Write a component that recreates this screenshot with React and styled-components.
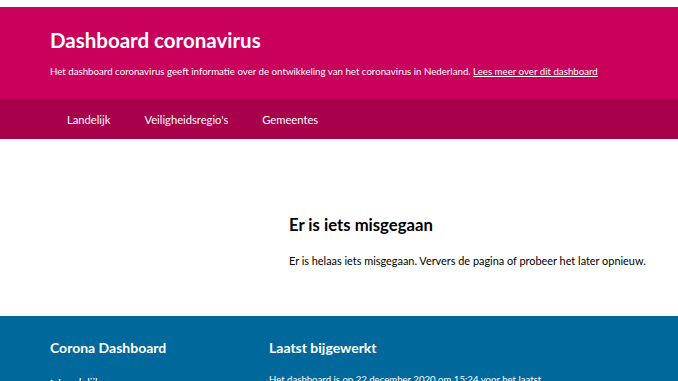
import styled, { createGlobalStyle } from "styled-components";

const GlobalStyle = createGlobalStyle`
  html, body {
    margin: 0;
    padding: 0;
    background: #fff;
    font-family: Lato, "Open Sans", sans-serif;
    color: #000;
  }
  * { box-sizing: border-box; }
`;

const TopStrip = styled.div`
  height: 7px;
  background: #fff;
`;

const Header = styled.header`
  background: #ca005d;
  color: #fff;
  height: 92px;
  padding: 20px 50px 0;
`;

const Title = styled.h1`
  margin: 0;
  font-size: 20.5px;
  line-height: 26px;
  font-weight: 700;
`;

const Lead = styled.p`
  margin: 10px 0 0;
  font-size: 9.7px;
  line-height: 16px;
  white-space: nowrap;
  a {
    color: #fff;
    text-decoration: underline;
  }
`;

const Nav = styled.nav`
  background: #a9004b;
  height: 40px;
  padding: 0 50px;
  display: flex;
  align-items: center;
`;

const NavItem = styled.a`
  color: #fff;
  font-size: 11.2px;
  padding: 0 17px;
  text-decoration: none;
`;

const Main = styled.main`
  height: 177px;
  display: grid;
  grid-template-columns: 289px 1fr;
  padding-top: 75px;
`;

const ErrorBox = styled.section`
  grid-column: 2;
`;

const ErrorTitle = styled.h2`
  margin: 0;
  font-size: 16.7px;
  line-height: 22px;
  font-weight: 700;
`;

const ErrorText = styled.p`
  margin: 17px 0 0;
  font-size: 10.9px;
  line-height: 16px;
`;

const Footer = styled.footer`
  background: #01689b;
  color: #fff;
  padding: 22px 50px 0;
  height: 65px;
  overflow: hidden;
  display: grid;
  grid-template-columns: 219px 1fr;
`;

const FooterCol = styled.div``;

const FooterTitle = styled.h3`
  margin: 0;
  font-size: 14px;
  line-height: 20px;
  font-weight: 700;
`;

const FooterList = styled.ul`
  list-style: none;
  margin: 17px 0 0;
  padding: 0;
`;

const FooterLink = styled.li`
  display: flex;
  align-items: center;
  gap: 3px;
  font-size: 11px;
  line-height: 16px;
  svg { flex: none; }
`;

const FooterText = styled.p`
  margin: 14px 0 0;
  font-size: 9.6px;
  line-height: 16px;
`;

export default function App() {
  return (
    <>
      <GlobalStyle />
      <TopStrip />
      <Header>
        <Title>Dashboard coronavirus</Title>
        <Lead>
          Het dashboard coronavirus geeft informatie over de ontwikkeling van het coronavirus in Nederland.{" "}
          <a href="#">Lees meer over dit dashboard</a>
        </Lead>
      </Header>
      <Nav>
        <NavItem href="#">Landelijk</NavItem>
        <NavItem href="#">Veiligheidsregio's</NavItem>
        <NavItem href="#">Gemeentes</NavItem>
      </Nav>
      <Main>
        <ErrorBox>
          <ErrorTitle>Er is iets misgegaan</ErrorTitle>
          <ErrorText>Er is helaas iets misgegaan. Ververs de pagina of probeer het later opnieuw.</ErrorText>
        </ErrorBox>
      </Main>
      <Footer>
        <FooterCol>
          <FooterTitle>Corona Dashboard</FooterTitle>
          <FooterList>
            <FooterLink>
              <svg width="5" height="8" viewBox="0 0 5 8">
                <path d="M1 1l3 3-3 3" stroke="#fff" strokeWidth="1.2" fill="none" />
              </svg>
              Landelijk
            </FooterLink>
          </FooterList>
        </FooterCol>
        <FooterCol>
          <FooterTitle>Laatst bijgewerkt</FooterTitle>
          <FooterText>Het dashboard is op 22 december 2020 om 15:24 voor het laatst</FooterText>
        </FooterCol>
      </Footer>
    </>
  );
}
